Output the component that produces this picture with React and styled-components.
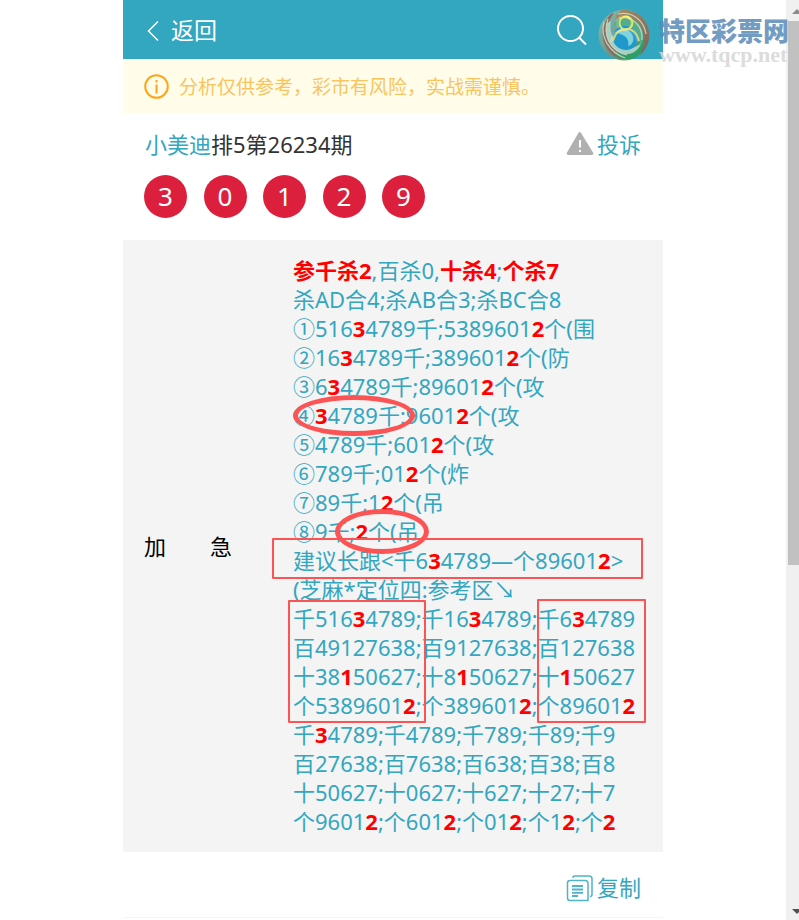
import styled, { createGlobalStyle } from 'styled-components';

const GlobalStyle = createGlobalStyle`
    * {
        box-sizing: border-box;
    }
    body {
        margin: 0;
        background: #fff;
        font-family: "Noto Sans", "Noto Sans CJK SC", sans-serif;
        font-size: 22px;
        line-height: 29px;
        color: #333;
    }
    button {
        padding: 0;
        border: 0;
        background: none;
        font: inherit;
        color: inherit;
        cursor: pointer;
    }
    a {
        text-decoration: none;
    }
    svg {
        display: block;
        flex: none;
    }
`

const Window = styled.div`
    position: relative;
    display: flex;
    min-height: 100vh;
    overflow: hidden;
`

const Page = styled.main`
    flex: 1;
    min-width: 0;
`

const Column = styled.div`
    max-width: 540px;
    margin: 0 auto;
    border-bottom: 1px solid #f5f5f5;
`

const Header = styled.header`
    display: flex;
    align-items: center;
    justify-content: space-between;
    height: 59px;
    padding: 0 21px;
    background: #33a6c0;
    color: #fff;
`

const BackButton = styled.button`
    display: flex;
    align-items: center;
    gap: 9px;
    padding-top: 2px;
    font-size: 23px;
`

const HeaderTools = styled.div`
    display: flex;
    gap: 22px;
`

const Notice = styled.div`
    display: flex;
    align-items: center;
    gap: 10px;
    height: 54px;
    padding: 2px 21px 0;
    background: #fffde9;
    color: #f9c45f;
    p {
        margin: 0;
        font-size: 19px;
    }
`

const TitleRow = styled.div`
    display: flex;
    align-items: center;
    justify-content: space-between;
    padding: 17px 22px 0;
    h1 {
        margin: 0;
        font-size: 22px;
        font-weight: 400;
    }
    a {
        color: #33a6c0;
    }
`

const Action = styled.button`
    display: flex;
    align-items: center;
    gap: 3px;
    color: #33a6c0;
`

const Balls = styled.ul`
    display: flex;
    justify-content: space-between;
    width: 281px;
    margin: 16px 21px 22px;
    padding: 0;
    list-style: none;
`

const Ball = styled.li`
    display: grid;
    place-items: center;
    width: 43px;
    height: 43px;
    border-radius: 50%;
    background: #dc1f3c;
    color: #fff;
    font-size: 26px;
`

const Panel = styled.section`
    display: grid;
    grid-template-columns: 149px 1fr;
    align-items: center;
    padding: 16px 0 16px 21px;
    background: #f4f4f4;
`

const PanelLabel = styled.h2`
    margin: 0;
    font-size: 22px;
    font-weight: 400;
    color: #000;
    white-space: pre;
`

const Tips = styled.div`
    position: relative;
    color: #33a6c0;
    white-space: nowrap;
    p {
        margin: 0;
    }
    b {
        color: #f00;
    }
`

// pen marks drawn over the tips
const Mark = styled.span`
    position: absolute;
    left: ${({ x }) => x}px;
    top: ${({ y }) => y}px;
    width: ${({ w }) => w}px;
    height: ${({ h }) => h}px;
    border: ${({ round }) => round ? 5 : 2}px solid #fc5454;
    border-radius: ${({ round }) => round ? '50%' : '1px'};
    pointer-events: none;
`

const Footer = styled.footer`
    display: flex;
    justify-content: flex-end;
    align-items: center;
    height: 65px;
    padding: 6px 22px 0;
`

const Scrollbar = styled.div`
    display: flex;
    flex-direction: column;
    justify-content: space-between;
    width: 13px;
    padding: 9px 0 6px 2px;
    overflow: hidden;
    background: #f0f0f0;
`

const Thumb = styled.div`
    flex: 1;
    margin-top: 7px;
    background: linear-gradient(#c1c1c1, #c1c1c1) no-repeat;
    background-size: 100% 61.3%;
`

const Arrow = styled.div`
    width: 10px;
    margin-left: 4px;
    border: 5px solid transparent;
    border-top: ${({ down }) => down ? '5px solid #505050' : 0};
    border-bottom: ${({ down }) => down ? 0 : '5px solid #8a8a8a'};
`

const Watermark = styled.div`
    position: absolute;
    top: 9px;
    right: 10px;
    display: flex;
    gap: 9px;
    opacity: 0.85;
    pointer-events: none;
`

const WatermarkText = styled.div`
    padding-top: 6px;
    strong {
        display: block;
        font-family: "Noto Sans CJK SC", sans-serif;
        font-size: 26px;
        font-weight: 900;
        color: #5a8bb8;
    }
    span {
        display: block;
        font-family: "Liberation Serif", serif;
        font-size: 22px;
        font-weight: 700;
        line-height: 22px;
        color: #d6d6d6;
    }
`

const BackIcon = () => (
    <svg width="18" height="22" viewBox="0 0 18 22" fill="none" stroke="#fff" strokeWidth="1.5">
        <path d="M14 1.5 4.500 11 14 20.500" />
    </svg>
)

const SearchIcon = () => (
    <svg width="32" height="32" viewBox="0 0 32 32" fill="none" stroke="#fff" strokeWidth="2">
        <circle cx="14.500" cy="14.500" r="12.500" />
        <path d="m23 23.500 7 7" />
    </svg>
)

const UserIcon = () => (
    <svg width="32" height="32" viewBox="0 0 32 32" fill="none" stroke="#fff" strokeWidth="2">
        <circle cx="14" cy="9" r="7" />
        <path d="M1 28c1-8 6-12 13-12s12 4 13 12" />
    </svg>
)

const InfoIcon = () => (
    <svg width="25" height="26" viewBox="0 0 25 26" fill="none" stroke="#fda51c" strokeWidth="2">
        <circle cx="12.500" cy="12.500" r="11.300" />
        <path d="M12.500 10.500v9M12.500 6v2.500" />
    </svg>
)

const WarningIcon = () => (
    <svg width="28" height="28" viewBox="0 0 28 28">
        <path d="M12.200 2.200q1.500-2.200 3 0L27 21.500q1 2.500-1.500 2.500h-23Q0 24 1 21.500Z" fill="#b0b0b0" />
        <path d="M14 9v7.500M14 19v2" stroke="#fff" strokeWidth="2" />
    </svg>
)

const CopyIcon = () => (
    <svg width="28" height="28" viewBox="0 0 28 28" fill="none" stroke="#4fb3ca" strokeWidth="1.5">
        <path d="M7 4V3.500Q7 2 8.500 2H23q3 0 3 3v15.500q0 2-2 2" />
        <path d="M4 6.500h15q3 0 3 3V26.500H4q-2.500 0-2.500-2.500V9q0-2.500 2.500-2.500Z" />
        <path d="M6 12h11M6 15.500h11M6 18.800h11M6 22h6" strokeWidth="1.800" />
    </svg>
)

const WatermarkLogo = () => (
    <svg width="52" height="52" viewBox="0 0 52 52" fill="none">
        <defs>
            <linearGradient id="ring" x1="0" y1="0" x2="1" y2="1">
                <stop offset="0" stopColor="#9fc0a8" />
                <stop offset="0.5" stopColor="#6f9a8c" />
                <stop offset="1" stopColor="#2f9a50" />
            </linearGradient>
            <linearGradient id="warm" x1="0" y1="0" x2="1" y2="1">
                <stop offset="0" stopColor="#b98a50" />
                <stop offset="1" stopColor="#8a5652" />
            </linearGradient>
        </defs>
        <circle cx="26" cy="26" r="25.500" fill="url(#ring)" />
        <path d="M13 5C1 17 2 36 16 47c5 3 10 4 15 3C15 45 7 32 10 18c1-6 3-10 6-14Z" fill="#a0604f" />
        <path d="M24 1c14-1 25 8 27 22 1 9-3 18-9 23 5-13 3-24-6-32-6-5-13-6-19-4 1-4 4-7 7-9Z" fill="url(#warm)" />
        <path d="M14 42c9 6 21 4 28-6 2-3 3-6 4-9 2 10-3 19-12 23-8 2-15-1-20-8Z" fill="#2f9c55" />
        <path d="M9 14c-4 14 3 27 17 31 9 1 15-4 18-12-6 7-15 8-22 3-7-5-11-13-9-24Z" fill="#b9d8c4" />
        <path d="M15 16c6-9 20-9 27 0 5 8 4 16 0 22 0-9-3-16-11-19-6-3-12-3-16-3Z" fill="#5cb080" />
        <path d="M17 22c4-7 15-7 20 0 6 9 1 18-8 19-9 0-14-6-14-12 1-3 1-5 2-7Z" fill="#1c96cf" />
        <path d="M17 24c5-5 13-4 17 1 3 5 1 11-4 12 2-7-3-12-13-13Z" fill="#8cdce2" />
        <path d="M6 13c-4 15 5 30 21 36M10 10C4 26 13 42 29 46M20 5c15-3 26 7 28 20M21 9c13-2 24 7 23 22" stroke="#dedac0" strokeWidth="1.200" />
        <circle cx="28" cy="14" r="6.500" stroke="#f6f850" strokeWidth="1.800" />
        <path d="M15 32c2-8 7-12 14-12 6 0 10 4 12 12" stroke="#f0dc70" strokeWidth="1.800" />
    </svg>
)

// digits and words wrapped in * are hits
const tips = [
    '*参千杀2*,百杀0,*十杀4*;*个杀7*',
    '杀AD合4;杀AB合3;杀BC合8',
    '①516*3*4789千;5389601*2*个(围',
    '②16*3*4789千;389601*2*个(防',
    '③6*3*4789千;89601*2*个(攻',
    '④*3*4789千;9601*2*个(攻',
    '⑤4789千;601*2*个(攻',
    '⑥789千;01*2*个(炸',
    '⑦89千;1*2*个(吊',
    '⑧9千;*2*个(吊',
    '建议长跟<千6*3*4789—个89601*2*>',
    '(芝麻\\定位四:参考区↘',
    '千516*3*4789;千16*3*4789;千6*3*4789',
    '百49127638;百9127638;百127638',
    '十38*1*50627;十8*1*50627;十*1*50627',
    '个5389601*2*;个389601*2*;个89601*2*',
    '千*3*4789;千4789;千789;千89;千9',
    '百27638;百7638;百638;百38;百8',
    '十50627;十0627;十627;十27;十7',
    '个9601*2*;个601*2*;个01*2*;个1*2*;个*2*',
]

const marks = [
    { x: 0, y: 139, w: 122, h: 41, round: true },
    { x: 42, y: 253, w: 94, h: 45, round: true },
    { x: -21, y: 282, w: 371, h: 41 },
    { x: -5, y: 344, w: 138, h: 123 },
    { x: 244, y: 343, w: 109, h: 124 },
]

const Tip = ({ text }) => (
    <p>
        {text.split('*').map((part, i) => {
            const value = part.replace('\\', '*')
            return i % 2 ? <b key={i}>{value}</b> : value
        })}
    </p>
)

const App = () => (
    <>
        <GlobalStyle />
        <Window>
            <Page>
                <Column>
                    <Header>
                        <BackButton type="button"><BackIcon />返回</BackButton>
                        <HeaderTools>
                            <button type="button" aria-label="搜索"><SearchIcon /></button>
                            <button type="button" aria-label="我的"><UserIcon /></button>
                        </HeaderTools>
                    </Header>
                    <Notice>
                        <InfoIcon />
                        <p>分析仅供参考，彩市有风险，实战需谨慎。</p>
                    </Notice>
                    <TitleRow>
                        <h1><a href="#author">小美迪</a>排5第26234期</h1>
                        <Action type="button"><WarningIcon />投诉</Action>
                    </TitleRow>
                    <Balls>
                        {[3, 0, 1, 2, 9].map(number => <Ball key={number}>{number}</Ball>)}
                    </Balls>
                    <Panel>
                        <PanelLabel>加　　急</PanelLabel>
                        <Tips>
                            {tips.map(text => <Tip key={text} text={text} />)}
                            {marks.map(mark => <Mark key={mark.y} {...mark} />)}
                        </Tips>
                    </Panel>
                    <Footer>
                        <Action type="button"><CopyIcon />复制</Action>
                    </Footer>
                </Column>
            </Page>
            <Scrollbar aria-hidden="true">
                <Arrow />
                <Thumb />
                <Arrow down />
            </Scrollbar>
            <Watermark>
                <WatermarkLogo />
                <WatermarkText>
                    <strong>特区彩票网</strong>
                    <span>www.tqcp.net</span>
                </WatermarkText>
            </Watermark>
        </Window>
    </>
)

export default App
